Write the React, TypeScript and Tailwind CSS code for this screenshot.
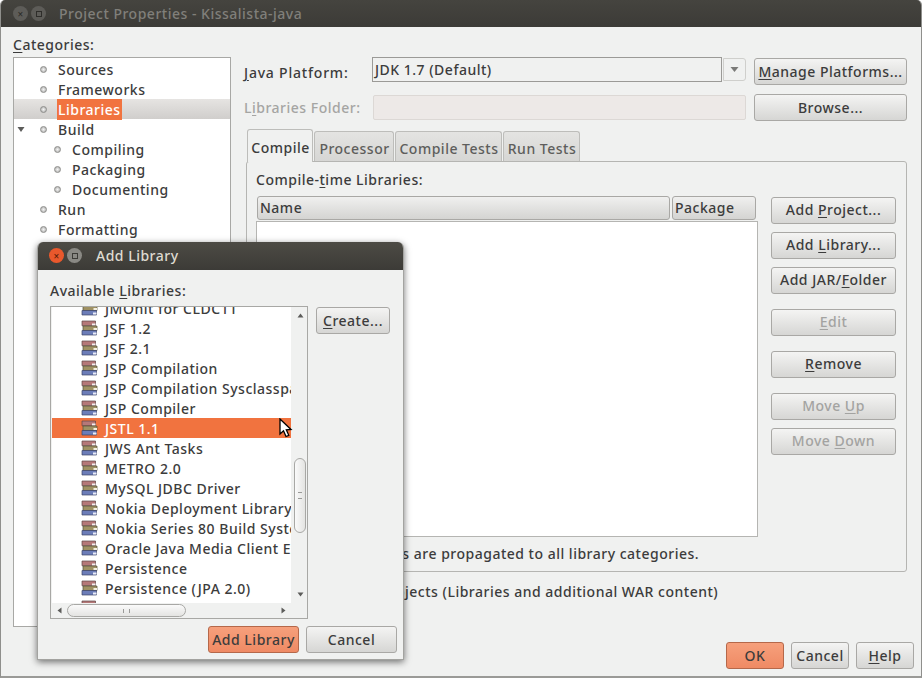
import type { ReactNode } from 'react'

const libraries = [
  'JMOnit for CLDC11',
  'JSF 1.2',
  'JSF 2.1',
  'JSP Compilation',
  'JSP Compilation Sysclasspath',
  'JSP Compiler',
  'JSTL 1.1',
  'JWS Ant Tasks',
  'METRO 2.0',
  'MySQL JDBC Driver',
  'Nokia Deployment Library',
  'Nokia Series 80 Build System',
  'Oracle Java Media Client Extensions',
  'Persistence',
  'Persistence (JPA 2.0)',
  'Project',
]

const tree = [
  { name: 'Sources', depth: 0 },
  { name: 'Frameworks', depth: 0 },
  { name: 'Libraries', depth: 0, selected: true },
  { name: 'Build', depth: 0, open: true },
  { name: 'Compiling', depth: 1 },
  { name: 'Packaging', depth: 1 },
  { name: 'Documenting', depth: 1 },
  { name: 'Run', depth: 0 },
  { name: 'Formatting', depth: 0 },
]

const Key = ({ children }: { children: ReactNode }) => <span className="underline underline-offset-2">{children}</span>

const Button = ({ children, className = '', disabled = false }: { children: ReactNode; className?: string; disabled?: boolean }) => (
  <div
    className={`flex h-[27px] items-center justify-center whitespace-pre rounded-[3px] border border-[#a9a8a5] bg-linear-to-b from-[#f4f4f3] to-[#d6d6d4] ${disabled ? 'text-[#a3a3a1]' : ''} ${className}`}
  >
    <span>{children}</span>
  </div>
)

const OrangeButton = ({ children, className = '' }: { children: ReactNode; className?: string }) => (
  <div
    className={`flex h-[27px] items-center justify-center whitespace-nowrap rounded-[3px] border border-[#b5684a] bg-linear-to-b from-[#f6a07c] to-[#ef8a64] ${className}`}
  >
    {children}
  </div>
)

const Bullet = () => <span className="block h-[7px] w-[7px] rounded-full border border-[#8e8e8c] bg-radial from-[#f4f4f4] to-[#a8a8a6]" />

const Books = () => (
  <svg width="17" height="16" viewBox="0 0 17 16" className="shrink-0">
    <path d="M1 1h13.500v4.800H1z" fill="#b57878" stroke="#5c4646" strokeWidth="0.7" />
    <path d="M11 3.500h3.500v2H11z" fill="#f4efef" />
    <path d="M2 6h14v4.500H2z" fill="#9f9163" stroke="#55503a" strokeWidth="0.7" />
    <path d="M12.500 8h3.500v2h-3.500z" fill="#f3efe0" />
    <path d="M1 10.500h14.500v4.500H1z" fill="#6c7db8" stroke="#3c4566" strokeWidth="0.7" />
    <path d="M12 12.500h3.500v2H12z" fill="#eceef8" />
  </svg>
)

const Arrow = ({ d }: { d: string }) => (
  <svg width="7" height="7" viewBox="0 0 7 7">
    <path d={d} fill="#5c5c5a" />
  </svg>
)

const WindowDots = ({ active }: { active?: boolean }) => (
  <div className="flex items-center gap-[3px]">
    <span
      className={`flex h-[15px] w-[15px] items-center justify-center rounded-full text-[10px] leading-none ${active ? 'bg-[#e9582c] text-[#5a1f08]' : 'bg-[#5d5c58] text-[#2e2d2a]'}`}
    >
      ×
    </span>
    <span className={`flex h-[15px] w-[15px] items-center justify-center rounded-full ${active ? 'bg-[#8a8984]' : 'bg-[#5d5c58]'}`}>
      <span className={`h-[6px] w-[6px] border ${active ? 'border-[#3c3b37]' : 'border-[#2e2d2a]'}`} />
    </span>
  </div>
)

const AddLibraryDialog = () => (
  <div className="absolute left-[36px] top-[242px] flex h-[418px] w-[367px] flex-col overflow-hidden rounded-t-[6px] border-x border-b border-[#a3a3a0] bg-[#f0f1f0] shadow-[0_2px_7px_rgba(0,0,0,0.55)]">
    <div className="flex h-[28px] shrink-0 items-center bg-linear-to-b from-[#4d4b45] to-[#3c3b37] pb-px pl-[11px]">
      <WindowDots active />
      <span className="ml-[14px] text-[#dfdbd2]">Add Library</span>
    </div>
    <div className="flex flex-1 flex-col pl-[12px] pr-[6px]">
      <div className="flex h-[36px] items-end pb-[5px] leading-[20px]">
        <span>
          Available <Key>L</Key>ibraries:
        </span>
      </div>
      <div className="flex">
        <div className="flex h-[313px] w-[258px] flex-col border border-[#a8a8a5] bg-[#f0f1f0] pl-px">
          <div className="flex h-[296px]">
            <div className="w-[239px] overflow-hidden bg-white">
              <div className="-mt-[9px]">
                {libraries.map((lib) => (
                  <div
                    key={lib}
                    className={`flex h-[20px] items-center gap-[7px] whitespace-nowrap pl-[29px] ${lib === 'JSTL 1.1' ? 'bg-[#f1733f] text-white' : ''}`}
                  >
                    <Books />
                    {lib}
                  </div>
                ))}
              </div>
            </div>
            <div className="relative flex flex-1 flex-col items-center justify-between py-[5px] pl-[2px]">
              <Arrow d="M3.500 1.500 L6.500 5.500 H0.500z" />
              <div className="absolute left-[3px] top-[151px] flex h-[75px] w-[12px] items-center justify-center rounded-full border border-[#a8a8a5] bg-linear-to-r from-[#fafafa] to-[#e4e4e2]">
                <span className="h-[7px] w-[4px] border-y border-[#9a9a98]" />
              </div>
              <Arrow d="M0.500 1.500 H6.500 L3.500 5.500z" />
            </div>
          </div>
          <div className="relative flex flex-1 items-center justify-between pl-[4px] pr-[20px]">
            <Arrow d="M1.500 3.500 L5.500 0.500 V6.500z" />
            <div className="absolute left-[15px] top-[1px] flex h-[13px] w-[119px] items-center justify-center rounded-full border border-[#a8a8a5] bg-linear-to-b from-[#fafafa] to-[#e4e4e2]">
              <span className="h-[4px] w-[7px] border-x border-[#9a9a98]" />
            </div>
            <Arrow d="M1.500 0.500 L5.500 3.500 L1.500 6.500z" />
          </div>
        </div>
        <Button className="ml-[8px] mt-px w-[74px]">
          <Key>C</Key>reate...
        </Button>
      </div>
      <div className="mt-[7px] flex justify-end gap-[7px]">
        <OrangeButton className="w-[91px]">Add Library</OrangeButton>
        <Button className="w-[91px]">Cancel</Button>
      </div>
    </div>
  </div>
)

const Cursor = () => (
  <svg width="14" height="21" viewBox="0 0 14 21" className="absolute left-[278px] top-[418px]">
    <path d="M1 1 L1 16 L4.500 12.800 L7 18.500 L9.800 17.300 L7.300 11.800 L12 11.500z" fill="#fff" stroke="#000" strokeWidth="1.300" />
  </svg>
)

export default function App() {
  return (
    <div className="relative flex h-[678px] w-[922px] flex-col overflow-hidden rounded-t-[5px] border-x border-b-[2px] border-x-[#8f8f8c] border-b-[#9a9a97] bg-[#f0f1f0] font-['Noto_Sans',sans-serif] text-[14px] font-medium tracking-[0.5px] text-[#3c3c3c]">
      <div className="flex h-[27px] shrink-0 items-center bg-linear-to-b from-[#45443f] to-[#3c3b37] pl-[12px]">
        <WindowDots />
        <span className="ml-[13px] text-[#807f7a]">Project Properties - Kissalista-java</span>
      </div>

      <div className="flex h-[600px] shrink-0 pl-[12px]">
        <div className="flex w-[218px] shrink-0 flex-col">
          <div className="flex h-[30px] items-end pb-[2px] leading-[20px]">
            <span>
              <Key>C</Key>ategories:
            </span>
          </div>
          <div className="flex-1 border border-[#a8a8a5] bg-white pt-px">
            {tree.map((item) => (
              <div
                key={item.name}
                className={`flex h-[20px] items-center ${item.selected ? 'bg-linear-to-b from-[#e6e4e2] to-[#d0cecc]' : ''}`}
              >
                <span className="flex w-[11px] justify-end">
                  {item.open && (
                    <svg width="8" height="7" viewBox="0 0 8 7">
                      <path d="M0.500 1 H7.500 L4 6z" fill="#5c5c5a" />
                    </svg>
                  )}
                </span>
                <span className={item.depth ? 'ml-[29px]' : 'ml-[15px]'}>
                  <Bullet />
                </span>
                <span className={`ml-[10px] px-px ${item.selected ? 'bg-[#f1733f] text-white' : ''}`}>{item.name}</span>
              </div>
            ))}
          </div>
        </div>

        <div className="ml-[13px] flex w-[663px] flex-col pt-[31px]">
          <div className="flex h-[27px]">
            <span className="mt-[4px] w-[128px] tracking-[0.8px]">
              <Key>J</Key>ava Platform:
            </span>
            <div className="-mt-px flex h-[24px] w-[374px]">
              <div className="flex h-[25px] flex-1 items-center border border-[#9b9a97] pl-[2px]">JDK 1.7 (Default)</div>
              <div className="ml-px mt-px flex h-[23px] w-[23px] items-center justify-center rounded-r-[3px] border border-[#cfcfcc]">
                <svg width="9" height="7" viewBox="0 0 9 7">
                  <path d="M0.500 1 H8.500 L4.500 6z" fill="#7a7a78" />
                </svg>
              </div>
            </div>
            <Button className="ml-[8px] w-[153px]">
              <Key>M</Key>anage Platforms...
            </Button>
          </div>

          <div className="mt-[9px] flex h-[27px]">
            <span className="mt-[3px] w-[129px] text-[#a5a5a3]">
              L<Key>i</Key>braries Folder:
            </span>
            <div className="mt-px h-[25px] w-[373px] rounded-[2px] border border-[#dcd8d5] bg-[#ede9e7]" />
            <Button className="ml-[8px] w-[153px]">Browse...</Button>
          </div>

          <div className="ml-[3px] mt-[8px] flex h-[32px] items-end">
            <div className="relative z-10 -mb-px flex h-[33px] w-[66px] items-center justify-center rounded-t-[3px] border border-b-0 border-[#bdbdba] bg-[#f0f1f0] pl-px pt-[2px]">
              Compile
            </div>
            {['Processor', 'Compile Tests', 'Run Tests'].map((tab) => (
              <div
                key={tab}
                className="ml-px flex h-[30px] items-center justify-center rounded-t-[3px] border border-b-0 border-[#bdbdba] bg-linear-to-b from-[#e4e4e2] to-[#d6d6d4] pl-px pt-[3px] text-[#5e5e5c]"
                style={{ width: tab === 'Processor' ? 80 : tab === 'Compile Tests' ? 107 : 77 }}
              >
                {tab}
              </div>
            ))}
          </div>

          <div className="ml-[2px] flex h-[411px] w-[661px] flex-col rounded-[3px] border border-[#b5b5b2] pl-[9px]">
            <div className="flex h-[34px] items-end pb-[6px] leading-[20px]">
              <span>
                Compile-<Key>t</Key>ime Libraries:
              </span>
            </div>
            <div className="flex">
              <div className="flex h-[341px] w-[502px] flex-col">
                <div className="flex h-[25px] shrink-0 gap-[2px] pl-px pr-[2px]">
                  <div className="flex h-[24px] flex-1 items-center rounded-[3px] border border-[#a9a8a5] bg-linear-to-b from-[#f0f0ef] to-[#d4d4d2] pb-px pl-[2px]">
                    Name
                  </div>
                  <div className="flex h-[24px] w-[84px] items-center rounded-[3px] border border-[#a9a8a5] bg-linear-to-b from-[#f0f0ef] to-[#d4d4d2] pb-px pl-[2px]">
                    Package
                  </div>
                </div>
                <div className="flex-1 border border-[#b5b5b2] bg-white" />
              </div>
              <div className="ml-[13px] flex w-[125px] flex-col pt-px">
                <Button className="pb-[2px]">
                  Add <Key>P</Key>roject...
                </Button>
                <Button className="mt-[8px] pb-[2px]">
                  Add <Key>L</Key>ibrary...
                </Button>
                <Button className="mt-[8px] pb-[2px]">
                  Add JAR/<Key>F</Key>older
                </Button>
                <Button disabled className="mt-[15px] pb-[2px]">
                  <Key>E</Key>dit
                </Button>
                <Button className="mt-[15px] pb-[2px]">
                  <Key>R</Key>emove
                </Button>
                <Button disabled className="mt-[15px] pb-[2px]">
                  Move <Key>U</Key>p
                </Button>
                <Button disabled className="mt-[8px] pb-[2px]">
                  Move <Key>D</Key>own
                </Button>
              </div>
            </div>
            <div className="-ml-[9px] mt-[7px] leading-[20px]">Compile-time Libraries are propagated to all library categories.</div>
          </div>

          <div className="mt-[10px] pl-[96px] leading-[20px]">Build Projects (Libraries and additional WAR content)</div>
        </div>
      </div>

      <div className="flex justify-end gap-[7px] pr-[7px] pt-[15px]">
        <OrangeButton className="w-[58px]">OK</OrangeButton>
        <Button className="w-[58px]">Cancel</Button>
        <Button className="w-[58px]">
          <Key>H</Key>elp
        </Button>
      </div>

      <AddLibraryDialog />
      <Cursor />
    </div>
  )
}
